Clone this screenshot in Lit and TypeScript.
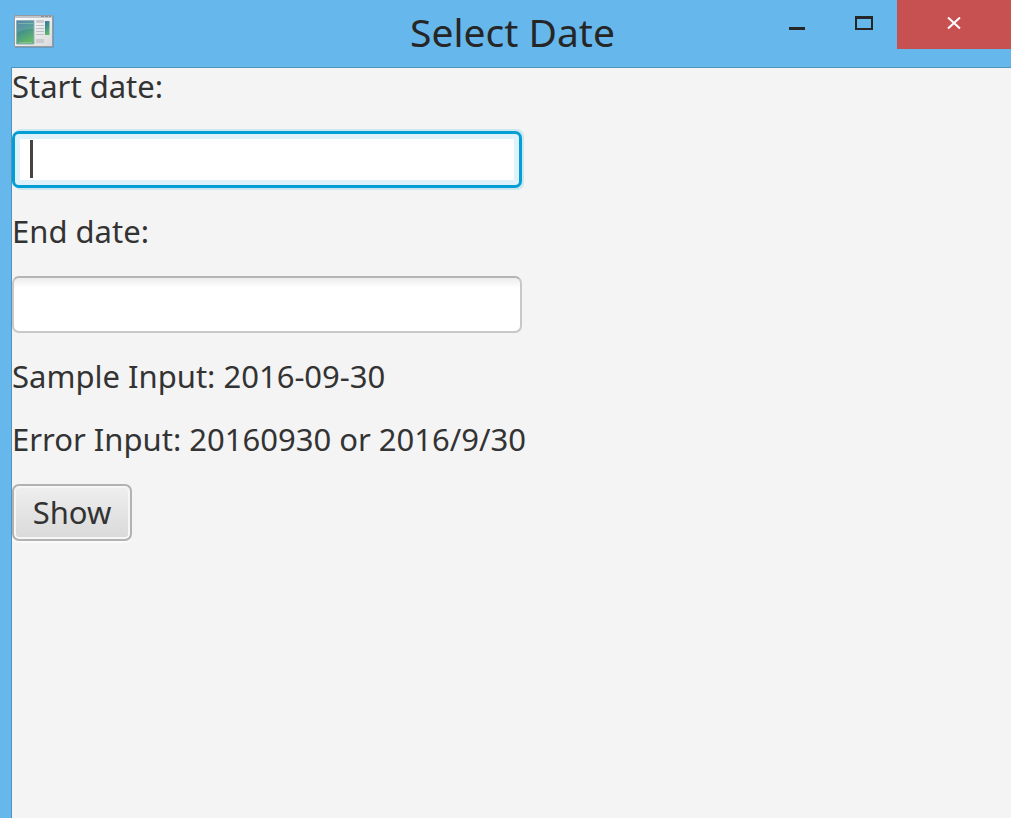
import { LitElement, html, css } from "lit";
import { customElement } from "lit/decorators.js";

@customElement("app-root")
export class AppRoot extends LitElement {
  static styles = css`
    :host {
      display: flex;
      flex-direction: column;
      min-height: 100vh;
      box-sizing: border-box;
      background: #66b7eb;
      font-family: "Noto Sans", "Open Sans", sans-serif;
      color: #333;
    }
    .titlebar {
      display: grid;
      grid-template-columns: 1fr auto 1fr;
      height: 67px;
      padding-left: 14px;
    }
    .app-icon {
      display: block;
      margin-top: 15px;
    }
    .title {
      margin: 0;
      font-size: 39px;
      font-weight: 400;
      line-height: 64px;
      color: #262626;
      white-space: nowrap;
    }
    .controls {
      display: flex;
      justify-content: flex-end;
      align-items: flex-start;
    }
    .control {
      display: grid;
      place-items: center;
      width: 67px;
      height: 49px;
      padding: 0;
      border: 0;
      background: none;
    }
    .close {
      width: 114px;
      background: #c75050;
    }
    .client {
      flex: 1;
      margin-left: 11px;
      border-top: 1px solid #5293bd;
      border-left: 1px solid #5293bd;
      background: #f4f4f4;
    }
    .form {
      display: flex;
      flex-direction: column;
      align-items: flex-start;
      gap: 25px;
      max-width: 510px;
    }
    .text {
      margin: 0 0 2px;
      font-size: 31px;
      line-height: 36px;
      white-space: nowrap;
    }
    .field {
      position: relative;
      width: 100%;
    }
    .input {
      display: block;
      box-sizing: border-box;
      width: 100%;
      height: 57px;
      padding: 0 16px;
      border: 2px solid #c8c8c8;
      border-top-color: #b5b5b5;
      border-radius: 7px;
      outline: none;
      background: linear-gradient(#ededed, #fff 10px);
      font: inherit;
      font-size: 31px;
      color: #333;
      caret-color: transparent;
    }
    .active {
      border: 3px solid #039ed3;
      background: #fff;
      box-shadow: inset 0 0 0 5px #dff2fa, 2px -2px 0 #cde7f1, 2px 2px 0 #cde7f1;
    }
    .caret {
      position: absolute;
      top: 9px;
      left: 18px;
      width: 3px;
      height: 38px;
      background: #444;
    }
    .show {
      min-width: 120px;
      height: 57px;
      padding: 0 18px 2px;
      border: 2px solid #b2b2b2;
      border-radius: 7px;
      background: linear-gradient(#efefef, #d9d9d9);
      box-shadow: inset 0 0 0 2px #f6f6f6, 0 2px 0 #fafafa;
      font: inherit;
      font-size: 31px;
      color: #333;
    }
  `;

  render() {
    return html`
      <header class="titlebar">
        <svg class="app-icon" width="40" height="33" viewBox="0 0 40 33" aria-hidden="true">
          <defs>
            <linearGradient id="screen" x1="0" y1="0" x2="0.4" y2="1">
              <stop offset="0" stop-color="#3d76a5" />
              <stop offset="0.5" stop-color="#43918b" />
              <stop offset="1" stop-color="#62b669" />
            </linearGradient>
            <linearGradient id="frame" x1="0" y1="0" x2="1" y2="1">
              <stop offset="0" stop-color="#fff" />
              <stop offset="1" stop-color="#d9dadd" />
            </linearGradient>
          </defs>
          <path d="M1 1H39.500V32.500H1Z" fill="#66859a" />
          <path d="M.5.5H38.500V31.500H.5Z" fill="url(#frame)" stroke="#969ba0" />
          <path d="M1 1H38V3H1Z" fill="#bfc5cb" />
          <path d="M27 1.500H37" stroke="#8c9095" stroke-dasharray="3 1" />
          <path d="M2.500 5.500H20V29H2.500Z" fill="url(#screen)" stroke="#8fb0b8" />
          <path d="M3 6H19.500V14Q9 14 3 18Z" fill="#fff" opacity=".12" />
          <path d="M4 8.500H19M5 27.500H18" stroke="#a5d0b5" opacity=".5" />
          <path d="M22 5H30V8H22ZM22 24H30V28H22Z" fill="#cbcbcd" />
          <path d="M22 10.500H30M22 13.500H30M22 16.500H30M22 19.500H30" stroke="#bfc0c3" />
          <path d="M31 6H35.500V20H31Z" fill="url(#screen)" />
        </svg>
        <h1 class="title">Select Date</h1>
        <div class="controls">
          <button class="control" type="button" aria-label="Minimize">
            <svg width="18" height="15" viewBox="0 0 18 15">
              <path d="M1 10H17V13H1Z" fill="#262626" />
            </svg>
          </button>
          <button class="control" type="button" aria-label="Maximize">
            <svg width="18" height="17" viewBox="0 0 18 17">
              <path d="M0 0H18V14H0ZM2 3V12H16V3Z" fill="#262626" fill-rule="evenodd" />
            </svg>
          </button>
          <button class="control close" type="button" aria-label="Close">
            <svg width="14" height="15" viewBox="0 0 14 15">
              <path d="M1 .5L13 11.500M13 .5L1 11.500" stroke="#fff" stroke-width="2" />
            </svg>
          </button>
        </div>
      </header>
      <main class="client">
        <form class="form" @submit=${(e: Event) => e.preventDefault()}>
          <label class="text" for="start">Start date:</label>
          <div class="field">
            <input class="input active" id="start" type="text" autocomplete="off" />
            <span class="caret"></span>
          </div>
          <label class="text" for="end">End date:</label>
          <div class="field">
            <input class="input" id="end" type="text" autocomplete="off" />
          </div>
          <p class="text">Sample Input: 2016-09-30</p>
          <p class="text">Error Input: 20160930 or 2016/9/30</p>
          <button class="show" type="submit">Show</button>
        </form>
      </main>
    `;
  }
}
